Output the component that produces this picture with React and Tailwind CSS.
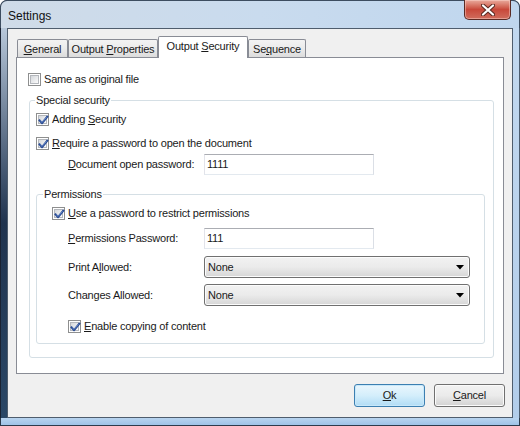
import React from "react";

function CheckBox({ checked }) {
  return (
    <span className="relative w-[13px] h-[13px] shrink-0 border border-[#8e8f8f] bg-white p-[1px] flex">
      <span className="w-full h-full border border-[#b4b7bc] bg-gradient-to-br from-[#d4d7db] to-[#fbfbfb]" />
      {checked && (
        <svg className="absolute left-0 top-0" width="13" height="13" viewBox="0 0 13 13">
          <path d="M2.6 6.4 L5.1 9.2 L10.3 2.6" fill="none" stroke="#2a4c94" strokeWidth="2.1" strokeLinejoin="round" strokeLinecap="square" />
          <path d="M3.2 6.6 L5.1 8.4 L9.6 3.2" fill="none" stroke="#7a9ad6" strokeWidth="0.7" />
        </svg>
      )}
    </span>
  );
}

function CheckRow({ checked, children, className }) {
  return (
    <div className={"flex items-center gap-[3px] h-[13px] " + (className || "")}>
      <CheckBox checked={checked} />
      <span className="leading-[13px]">{children}</span>
    </div>
  );
}

function TextBox({ value }) {
  return (
    <div className="w-[170px] h-[21px] border border-[#abadb3] border-l-[#e2e3ea] border-r-[#dbdfe6] border-b-[#e3e9ef] bg-white flex items-center pl-[2px] leading-[13px]">
      {value}
    </div>
  );
}

function Select({ value }) {
  return (
    <div className="w-[266px] h-[22px] rounded-[3px] border border-[#707070] bg-gradient-to-b from-[#f2f2f2] via-[#ebebeb] to-[#d6d6d6] shadow-[inset_0_0_0_1px_#fcfcfc] flex items-center pl-[3px] pr-[5px] leading-[13px]">
      <span className="flex-1">{value}</span>
      <svg width="8" height="5" viewBox="0 0 8 5">
        <path d="M0 0 H8 L4 4.5 Z" fill="#000" />
      </svg>
    </div>
  );
}

function Tab({ children, selected, w }) {
  if (selected) {
    return (
      <div className={"relative z-10 -mb-px h-[22px] border border-b-0 border-[#898c95] rounded-t-[2px] bg-white flex items-start justify-center pt-[3px] " + w}>
        <span className="leading-[13px]">{children}</span>
      </div>
    );
  }
  return (
    <div className={"h-[18px] border border-b-0 border-[#898c95] rounded-t-[2px] bg-gradient-to-b from-[#f3f3f3] via-[#ebebeb] to-[#dcdcdc] flex items-start justify-center pt-[3px] " + w}>
      <span className="leading-[13px]">{children}</span>
    </div>
  );
}

export default function App() {
  return (
    <div className="w-[520px] h-[426px] flex flex-col overflow-hidden rounded-t-[7px] bg-[#1c2d45] text-[11px] text-[#1a1a1a] font-['Liberation_Sans',Arial,sans-serif]">
      {/* title bar */}
      <div className="relative h-[28px] shrink-0 rounded-t-[7px] border-t border-l border-r border-[#3d4d60] bg-gradient-to-r from-[#cfdbe8] via-[#c9dbee] to-[#bfd6ee] flex items-center pl-[7px]">
        <span className="text-[12px] text-[#111] leading-[14px] mt-[2px]">Settings</span>
        <div className="absolute right-[8px] top-[-1px] w-[47px] h-[20px] rounded-b-[5px] border border-t-0 border-[#5a2b25] bg-gradient-to-b from-[#e8aa9d] via-[#c8483a] to-[#d06c5c] shadow-[inset_0_0_0_1px_rgba(255,220,210,0.45)] flex items-center justify-center">
          <svg width="14" height="12" viewBox="0 0 14 12">
            <path d="M2 1.5 L12 10.5 M12 1.5 L2 10.5" stroke="#5b2a22" strokeWidth="4.2" strokeLinecap="round" />
            <path d="M2 1.5 L12 10.5 M12 1.5 L2 10.5" stroke="#ffffff" strokeWidth="2.2" strokeLinecap="round" />
          </svg>
        </div>
      </div>

      {/* body row */}
      <div className="flex flex-1 min-h-0 tracking-[-0.2px]">
        <div className="w-[7px] shrink-0 bg-gradient-to-b from-[#b8c8da] via-[#20334e] to-[#2a4766] border-l border-[#1a2232]" />
        <div className="w-[506px] shrink-0 border border-[#4f5d6d] bg-[#f0f0f0] flex flex-col">
          {/* tabs */}
          <div className="flex items-end h-[21px] mt-[7px] ml-[9px]">
            <Tab w="w-[51px]"><span className="underline">G</span>eneral</Tab>
            <Tab w="w-[90px]">Output <span className="underline">P</span>roperties</Tab>
            <Tab w="w-[90px]" selected>Output <span className="underline">S</span>ecurity</Tab>
            <Tab w="w-[58px]">Se<span className="underline">q</span>uence</Tab>
          </div>
          {/* panel */}
          <div className="ml-[8px] w-[488px] h-[317px] border border-[#898c95] bg-white pt-[15px] pl-[11px]">
            <CheckRow checked={false}>Same as original file</CheckRow>

            {/* Special security group */}
            <div className="relative ml-[1px] mt-[14px] w-[465px] h-[258px] rounded-[3px] border border-[#d5dfe5]">
              <span className="absolute left-[5px] top-[-7px] bg-white px-[1px] leading-[13px]">Special security</span>
              <div className="pl-[6px] pt-[12px] flex flex-col">
                <CheckRow checked>Adding <span className="underline">S</span>ecurity</CheckRow>
                <CheckRow checked className="mt-[11px]"><span className="underline">R</span>equire a password to open the document</CheckRow>
                <div className="flex items-center mt-[4px] ml-[32px]">
                  <span className="w-[136px] leading-[13px]"><span className="underline">D</span>ocument open password:</span>
                  <TextBox value="1111" />
                </div>

                {/* Permissions group */}
                <div className="relative mt-[19px] w-[449px] h-[150px] rounded-[3px] border border-[#d5dfe5]">
                  <span className="absolute left-[6px] top-[-7px] bg-white px-[1px] leading-[13px]">Permissions</span>
                  <div className="pl-[15px] pt-[12px] flex flex-col">
                    <CheckRow checked><span className="underline">U</span>se a password to restrict permissions</CheckRow>
                    <div className="flex items-center mt-[8px] ml-[16px]">
                      <span className="w-[136px] leading-[13px]"><span className="underline">P</span>ermissions Password:</span>
                      <TextBox value="111" />
                    </div>
                    <div className="flex items-center mt-[7px] ml-[16px]">
                      <span className="w-[136px] leading-[13px]">Print A<span className="underline">l</span>lowed:</span>
                      <Select value="None" />
                    </div>
                    <div className="flex items-center mt-[6px] ml-[16px]">
                      <span className="w-[136px] leading-[13px]">Changes Allowed:</span>
                      <Select value="None" />
                    </div>
                    <CheckRow checked className="mt-[14px] ml-[16px]"><span className="underline">E</span>nable copying of content</CheckRow>
                  </div>
                </div>
              </div>
            </div>
          </div>
          {/* buttons */}
          <div className="flex justify-end gap-[9px] mt-[10px] pr-[7px]">
            <div className="w-[71px] h-[23px] rounded-[3px] border border-[#3c7fb1] bg-gradient-to-b from-[#eaf6fd] via-[#d4eefb] to-[#b0dcf5] shadow-[inset_0_0_0_1px_#c8e8fa] flex items-center justify-center leading-[13px]">
              <span><span className="underline">O</span>k</span>
            </div>
            <div className="w-[71px] h-[23px] rounded-[3px] border border-[#707070] bg-gradient-to-b from-[#f2f2f2] via-[#ebebeb] to-[#d2d2d2] shadow-[inset_0_0_0_1px_#fbfbfb] flex items-center justify-center leading-[13px]">
              <span><span className="underline">C</span>ancel</span>
            </div>
          </div>
        </div>
        <div className="w-[7px] shrink-0 bg-gradient-to-b from-[#c2d8ef] to-[#b2cdea] border-r border-[#4c5d70]" />
      </div>
      {/* bottom strip */}
      <div className="h-[8px] shrink-0 border-b border-l border-r border-[#2d3b4c] bg-gradient-to-b from-[#b8d4ef] to-[#9fc3e8]" />
    </div>
  );
}
